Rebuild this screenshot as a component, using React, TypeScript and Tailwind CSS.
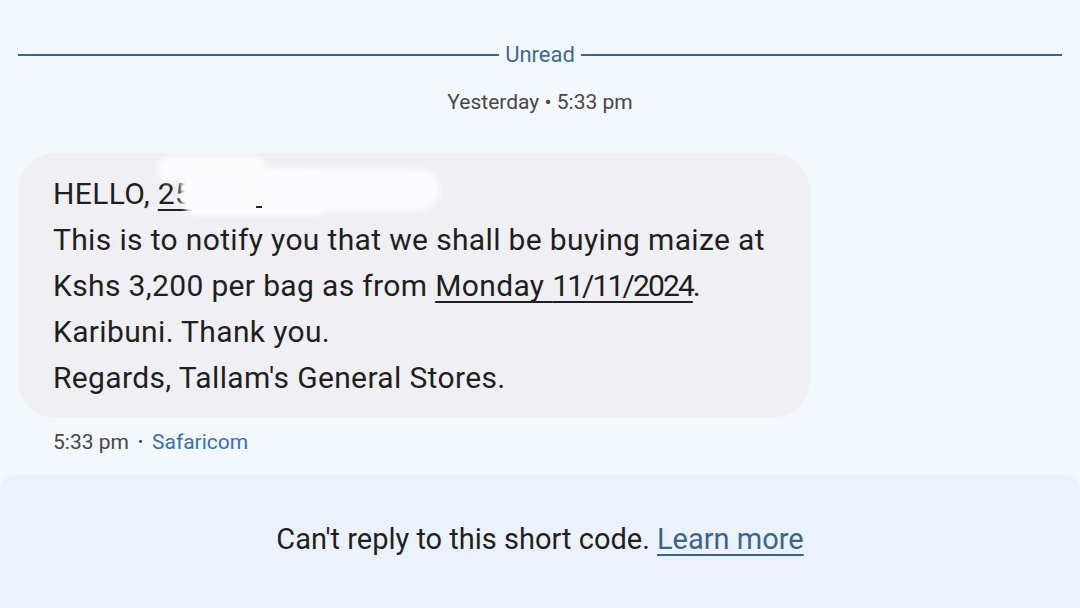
export default function App() {
  return (
    <div
      className="flex h-[608px] w-[1080px] flex-col overflow-hidden bg-[#f3f8fd] text-[#1f1f1f]"
      style={{ fontFamily: 'Roboto, "Noto Sans", sans-serif' }}
    >
      <div className="flex items-center px-[18px] pt-[42px]">
        <div className="h-[2px] flex-1 bg-[#3f6580]" />
        <span className="px-[6px] text-[22px] leading-[26px] text-[#3b6a91]">Unread</span>
        <div className="h-[2px] flex-1 bg-[#3f6580]" />
      </div>

      <div className="mt-[22px] text-center text-[21px] leading-[24px] text-[#474747]">
        Yesterday • 5:33 pm
      </div>

      <div className="mt-[39px] px-[18px]">
        <div className="relative w-[792px] rounded-[38px] bg-[#f0eff4] px-[35px] pb-[17px] pt-[18px] text-[30px] leading-[46px] tracking-[0.35px]">
          <div>
            HELLO, <span className="underline decoration-[2px] underline-offset-[5px]">25</span>
          </div>
          <div>This is to notify you that we shall be buying maize at</div>
          <div>
            Kshs 3,200 per bag as from{' '}
            <span className="underline decoration-[2px] underline-offset-[5px] [text-decoration-skip-ink:none]">
              Monday <span className="tracking-[-1.9px]">11/11/2024</span>
            </span>
            .
          </div>
          <div>Karibuni. Thank you.</div>
          <div>Regards, Tallam's General Stores.</div>
          <div className="absolute left-[139px] top-[3px] h-[26px] w-[110px] rounded-[14px] bg-[#fbfbfd] blur-[3px]" />
          <div className="absolute left-[163px] top-[17px] h-[46px] w-[150px] rounded-[18px] bg-[#fbfbfd] blur-[2px]" />
          <div className="absolute left-[232px] top-[16px] h-[42px] w-[190px] rounded-full bg-[#fbfbfd] blur-[3px]" />
          <div className="absolute left-[238px] top-[53px] h-[2px] w-[6px] bg-[#1f1f1f]" />
        </div>
      </div>

      <div className="mt-[12px] flex items-center px-[53px] text-[21px] leading-[24px]">
        <span className="text-[#474747]">5:33 pm</span>
        <span className="mx-[9px] text-[15px] text-[#474747]">•</span>
        <span className="text-[#3d6db3]">Safaricom</span>
      </div>

      <div className="mt-[21px] flex flex-1 items-center justify-center rounded-t-[14px] bg-[#ebf2fc] pb-[3px] text-[29px]">
        <span>Can't reply to this short code.&nbsp;</span>
        <span className="text-[#3a6591] underline decoration-[2px] underline-offset-[5px]">Learn more</span>
      </div>
    </div>
  );
}
